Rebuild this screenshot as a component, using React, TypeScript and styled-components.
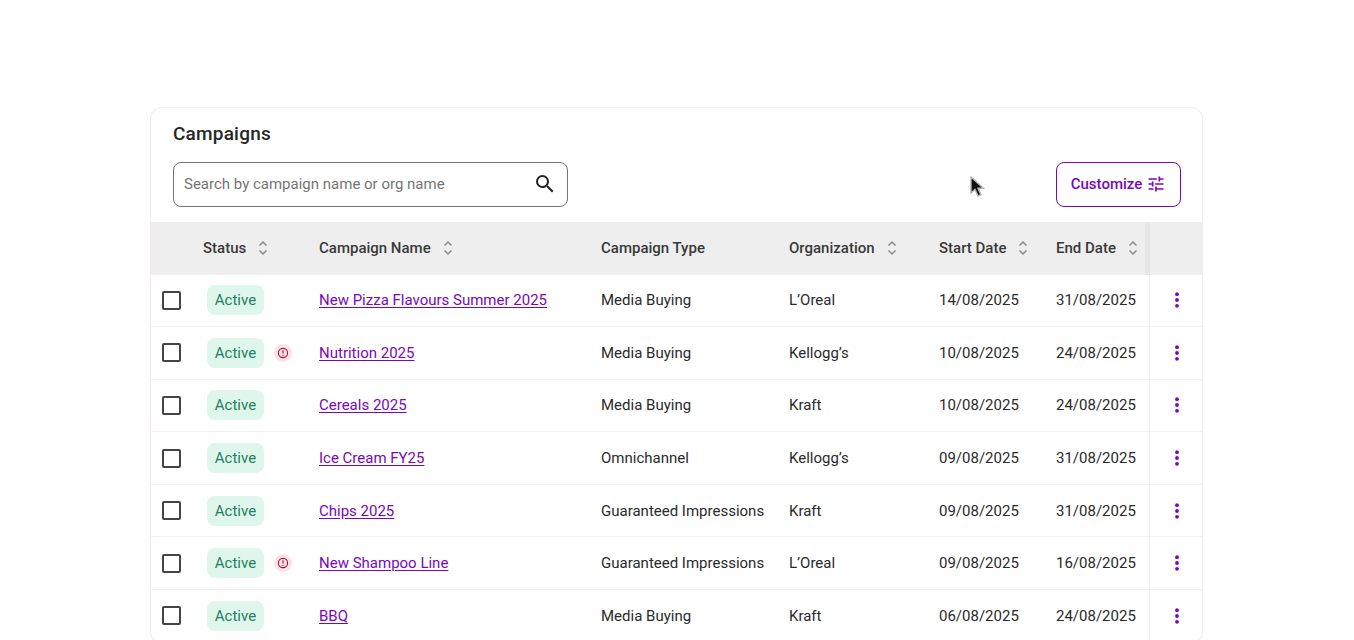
import React from "react";
import styled, { createGlobalStyle } from "styled-components";
import { MdSearch, MdTune } from "react-icons/md";

const GlobalStyle = createGlobalStyle`
  html, body {
    margin: 0;
    height: 640px;
    overflow: hidden;
    background: #fff;
    font-family: Roboto, "Liberation Sans", sans-serif;
    color: #212121;
  }
`;

const COLUMNS = "52px 116px 282px 188px 150px 117px 93px 53px";
const PURPLE = "#7a07b8";

const Page = styled.div`
  position: relative;
  height: 640px;
  overflow: hidden;
  padding: 107px 151px 0 150px;
  box-sizing: border-box;
`;

const Card = styled.section`
  border: 1px solid #eeeeee;
  border-left-color: #f3e8f3;
  border-radius: 12px;
  background: #fff;
  overflow: hidden;
`;

const Title = styled.h2`
  margin: 0;
  padding: 14px 22px 0;
  font-size: 19px;
  line-height: 24px;
  font-weight: 500;
  letter-spacing: 0.2px;
  color: #262626;
`;

const Toolbar = styled.div`
  display: flex;
  justify-content: space-between;
  padding: 16px 21px 15px 22px;
`;

const SearchBox = styled.div`
  width: 395px;
  height: 45px;
  box-sizing: border-box;
  display: flex;
  align-items: center;
  justify-content: space-between;
  padding: 0 10px 1px 10px;
  border: 1px solid #757575;
  border-radius: 8px;
  font-size: 15px;
  color: #757575;
  svg {
    color: #212121;
  }
`;

const CustomizeButton = styled.button`
  width: 125px;
  height: 45px;
  display: flex;
  align-items: center;
  justify-content: center;
  gap: 4px;
  border: 1px solid ${PURPLE};
  border-radius: 8px;
  background: #fff;
  color: ${PURPLE};
  font-family: inherit;
  font-size: 15px;
  font-weight: 500;
  padding: 0 0 1px 0;
`;

const HeadRow = styled.div`
  display: grid;
  grid-template-columns: ${COLUMNS};
  height: 52.5px;
  align-items: center;
  background: #eeeeee;
`;

const HeadCell = styled.div`
  display: flex;
  align-items: center;
  gap: 12px;
  font-size: 15px;
  font-weight: 500;
  color: #3a3a3a;
`;

const StickyHead = styled.div`
  height: 100%;
  border-left: 5px solid #e6e6e6;
  margin-left: -4px;
`;

const Row = styled.div`
  display: grid;
  grid-template-columns: ${COLUMNS};
  height: 52.6px;
  box-sizing: border-box;
  align-items: center;
  border-bottom: 1px solid #f1f1f1;
  font-size: 15px;
  color: #2a2a2a;
`;

const CheckCell = styled.div`
  padding-left: 11px;
  display: flex;
`;

const Checkbox = styled.span`
  width: 19px;
  height: 19px;
  box-sizing: border-box;
  border: 2px solid #444;
  border-radius: 2px;
`;

const StatusCell = styled.div`
  display: flex;
  align-items: center;
  gap: 10px;
  padding-left: 4px;
`;

const Badge = styled.span`
  width: 57px;
  height: 30px;
  display: flex;
  align-items: center;
  justify-content: center;
  border-radius: 8px;
  background: #dff6ec;
  color: #1f7f5f;
  font-size: 15px;
`;

const Warning = styled.span`
  width: 18px;
  height: 18px;
  display: flex;
  align-items: center;
  justify-content: center;
  border-radius: 50%;
  background: #fbe3e5;
`;

const NameLink = styled.a`
  color: ${PURPLE};
  text-decoration: underline;
  text-underline-offset: 2px;
  justify-self: start;
`;

const ActionCell = styled.div`
  height: 100%;
  display: flex;
  align-items: center;
  justify-content: center;
  border-left: 1px solid #f1f1f1;
  padding-left: 2px;
`;

const CursorMark = styled.svg`
  position: absolute;
  left: 968px;
  top: 175px;
`;

const SortIcon = () => (
  <svg width="10" height="16" viewBox="0 0 10 16" fill="none" stroke="#8a8a8a" strokeWidth="1.5">
    <path d="M1.5 5.5 5 2l3.5 3.5" />
    <path d="M1.5 10.5 5 14l3.5-3.5" />
  </svg>
);

const KebabIcon = () => (
  <svg width="6" height="16" viewBox="0 0 6 16" fill={PURPLE}>
    <circle cx="3" cy="2.2" r="1.9" />
    <circle cx="3" cy="8" r="1.9" />
    <circle cx="3" cy="13.8" r="1.9" />
  </svg>
);

const AlertIcon = () => (
  <svg width="12" height="12" viewBox="0 0 12 12" fill="none" stroke="#a3123f" strokeWidth="1.1">
    <circle cx="6" cy="6" r="4.6" />
    <path d="M6 3.2v3.4" />
    <path d="M6 7.9v1" />
  </svg>
);

const campaigns = [
  { name: "New Pizza Flavours Summer 2025", type: "Media Buying", org: "L’Oreal", start: "14/08/2025", end: "31/08/2025" },
  { name: "Nutrition 2025", type: "Media Buying", org: "Kellogg’s", start: "10/08/2025", end: "24/08/2025", alert: true },
  { name: "Cereals 2025", type: "Media Buying", org: "Kraft", start: "10/08/2025", end: "24/08/2025" },
  { name: "Ice Cream FY25", type: "Omnichannel", org: "Kellogg’s", start: "09/08/2025", end: "31/08/2025" },
  { name: "Chips 2025", type: "Guaranteed Impressions", org: "Kraft", start: "09/08/2025", end: "31/08/2025" },
  { name: "New Shampoo Line", type: "Guaranteed Impressions", org: "L’Oreal", start: "09/08/2025", end: "16/08/2025", alert: true },
  { name: "BBQ", type: "Media Buying", org: "Kraft", start: "06/08/2025", end: "24/08/2025" },
];

const heads = [
  { label: "Status", sort: true },
  { label: "Campaign Name", sort: true },
  { label: "Campaign Type", sort: false },
  { label: "Organization", sort: true },
  { label: "Start Date", sort: true },
  { label: "End Date", sort: true },
];

const App: React.FC = () => {
  return (
    <Page>
      <GlobalStyle />
      <Card>
        <Title>Campaigns</Title>
        <Toolbar>
          <SearchBox>
            Search by campaign name or org name
            <MdSearch size={24} />
          </SearchBox>
          <CustomizeButton>
            Customize
            <MdTune size={20} />
          </CustomizeButton>
        </Toolbar>
        <HeadRow>
          <div />
          {heads.map((h) => (
            <HeadCell key={h.label}>
              {h.label}
              {h.sort && <SortIcon />}
            </HeadCell>
          ))}
          <StickyHead />
        </HeadRow>
        {campaigns.map((c) => (
          <Row key={c.name}>
            <CheckCell>
              <Checkbox />
            </CheckCell>
            <StatusCell>
              <Badge>Active</Badge>
              {c.alert && (
                <Warning>
                  <AlertIcon />
                </Warning>
              )}
            </StatusCell>
            <NameLink href="#">{c.name}</NameLink>
            <div>{c.type}</div>
            <div>{c.org}</div>
            <div>{c.start}</div>
            <div>{c.end}</div>
            <ActionCell>
              <KebabIcon />
            </ActionCell>
          </Row>
        ))}
      </Card>
      <CursorMark width="18" height="24" viewBox="0 0 18 24">
        <path d="M3 2v16l4-3.6 3 6.6 3-1.3-3-6.4h5.4z" fill="#111" stroke="#b5b5b5" strokeWidth="1.4" />
      </CursorMark>
    </Page>
  );
};

export default App;
